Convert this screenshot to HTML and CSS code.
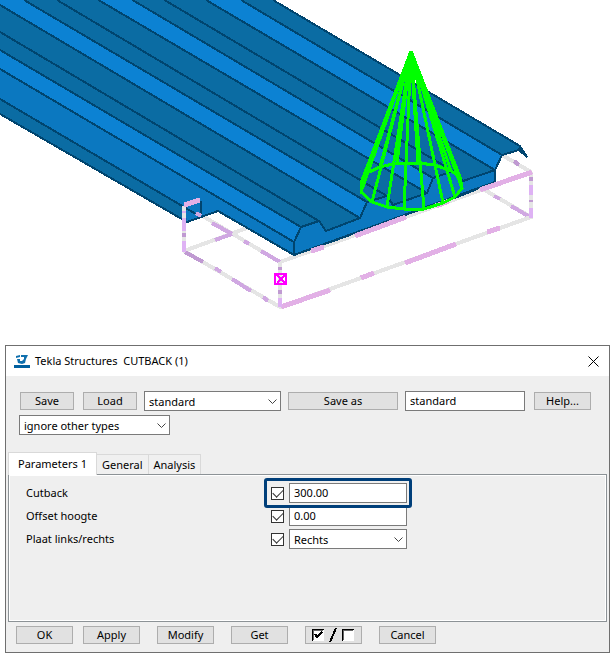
FILE: index.html
```html
<!DOCTYPE html>
<html lang="en">
<head>
<meta charset="utf-8">
<meta name="viewport" content="width=device-width, initial-scale=1">
<title>Tekla Structures CUTBACK (1)</title>
<link rel="stylesheet" href="styles.css">
</head>
<body>
<svg class="scene" viewBox="0 0 612 345" role="img" aria-label="Profiled sheet with cutback symbol" shape-rendering="crispEdges">
  <!-- bounding box edges hidden partly by the sheet -->
  <g class="guide">
    <path d="M184 251L247 228M201 215L280 262M280 262L531 172M502 155L531 172M483 189L531 217"/>
  </g>
  <path class="dash-a" d="M215 240L232 234M494 196L500 199M511 206L530 217M212 223L232 234M244 241L249 244M261 251L280 262"/>
  <path class="dash-b" d="M514 161L519 165"/>

  <!-- sheet surfaces -->
  <path class="dark" d="M0 0H273L520 146L527 157L518 150L502 155L495 170L463 181L453 171L433 178L427 193L393 205L387 196L367 202L360 218L326 231L319 221L301 227L294 242L218 211L187 222L0 113.500Z"/>
  <path class="light" d="M206 0H241L502 155L495 170ZM98.500 0H132.500L433 178L427 193ZM0 0H24L367 202L360 218L0 5ZM0 50L301 227L294 242L0 69Z"/>
  <path class="mid" d="M0 69L294 242V255L218 211L201 217L0 99ZM294 242L301 227L319 221L326 231L360 218L367 202L387 196L393 205L427 193L433 178L453 171L463 181L495 170V182L294 255ZM185 205L201 200V217L187 222Z"/>
  <path class="edge" d="M273 0L520 146L527 157M241 0L502 155M206 0L495 170M164.500 0L453 171M132.500 0L433 178M98.500 0L427 193M57 0L387 196M24 0L367 202M0 5L360 218M0 32L319 221M0 50L301 227M0 69L294 242M0 99L201 217M201 201V214"/>
  <path class="edge" d="M294 255V242L301 227L319 221L326 231L360 218L367 202L387 196L393 205L427 193L433 178L453 171L463 181L495 170L502 155L519 150L527 157M495 170V182"/>
  <path class="edge bold" d="M0 114L187 222L218 211L294 255L495 182"/>
  <path class="tip" d="M520 146L528 157L516 150Z"/>

  <!-- bounding box edges in front -->
  <g class="guide">
    <path d="M184 206V251L280 307L531 217V172M280 262V307"/>
  </g>
  <path class="edge bold" d="M294 255L350 235M405 215L434 205M455 198L482 187"/>
  <path class="dash-a" d="M196 213L201 216M215 268L221 272M232 279L251 291M263 297L268 301"/>
  <path class="dash-b" d="M185 252L203 262"/>
  <path class="dash-c" d="M184 205L200 200M281 307L330 290M361 278L374 273M405 263L456 244M487 232L500 228M311 251L324 247M355 236L406 217M436 206L449 201M480 190L532 172"/>
  <path class="dash-d" d="M184 211V213M184 218V231M184 241V252M280 298V307M531 185V195M531 208V218"/>
  <path class="dash-b" d="M184 233V237M280 267V270M280 290V294M531 177V181M531 200V202"/>
  <path class="handle" d="M275 274H286V284H275ZM277 275L285 283M285 275L277 283"/>

  <!-- cone symbol -->
  <path class="cone" d="M411 51L361 183M411 51L361 192M411 51L372 202M411 51L387 207M411 51L404 209M411 51L424 209M411 51L443 203M411 51L455 197M411 51L462 188M411 51L460 177M411 51L451 171M411 51L435 165M411 51L418 163M411 51L397 163M411 51L380 167M411 51L367 173"/>
  <path class="cone" d="M361 183L367 173L380 167L397 163L418 163L435 165L451 171L460 177L462 188L455 197L443 203L424 209L404 209L387 207L372 202L361 192Z"/>
</svg>

<main class="dialog">
  <header class="titlebar">
    <svg class="logo" viewBox="0 0 16 14" aria-hidden="true">
      <path fill="#005f9e" d="M0 11H16V14H0Z"/>
      <path fill="#1070ae" d="M2 2L6 1V3L2 4ZM7 1H14L12 5L11 9L8 10L4 9L3 5H6V7H8L10 5V3H7Z"/>
    </svg>
    <h1 class="title">Tekla Structures&nbsp; CUTBACK (1)</h1>
    <button class="close" type="button" aria-label="Close">
      <svg viewBox="0 0 11 11" width="11" height="11" aria-hidden="true"><path d="M.5 .5L10.500 10.500M10.500 .5L.5 10.500" stroke="#000" fill="none"/></svg>
    </button>
  </header>

  <div class="toolbar">
    <div class="pair">
      <button class="btn" type="button">Save</button>
      <button class="btn" type="button">Load</button>
    </div>
    <div class="combo profile">
      <select aria-label="Saved settings"><option>standard</option></select>
      <svg class="chevron" viewBox="0 0 9 6" aria-hidden="true"><path d="M.5 .5L4.500 4.500L8.500 .5"/></svg>
    </div>
    <button class="btn save-as" type="button">Save as</button>
    <input class="field name" type="text" value="standard" aria-label="Save as name">
    <button class="btn help" type="button">Help...</button>
  </div>
  <div class="combo filter">
    <select aria-label="Type filter"><option>ignore other types</option></select>
    <svg class="chevron" viewBox="0 0 9 6" aria-hidden="true"><path d="M.5 .5L4.500 4.500L8.500 .5"/></svg>
  </div>

  <div class="tabs" role="tablist">
    <button class="tab active" type="button" role="tab" aria-selected="true">Parameters 1</button>
    <button class="tab" type="button" role="tab" aria-selected="false">General</button>
    <button class="tab" type="button" role="tab" aria-selected="false">Analysis</button>
  </div>
  <section class="panel" role="tabpanel">
    <div class="row">
      <label for="cutback">Cutback</label>
      <div class="entry highlight">
        <input class="check" type="checkbox" checked aria-label="Use Cutback">
        <input class="field" id="cutback" type="text" value="300.00">
      </div>
    </div>
    <div class="row">
      <label for="offset">Offset hoogte</label>
      <div class="entry">
        <input class="check" type="checkbox" checked aria-label="Use Offset hoogte">
        <input class="field" id="offset" type="text" value="0.00">
      </div>
    </div>
    <div class="row">
      <label for="side">Plaat links/rechts</label>
      <div class="entry">
        <input class="check" type="checkbox" checked aria-label="Use Plaat links/rechts">
        <div class="combo">
          <select id="side"><option>Rechts</option></select>
          <svg class="chevron" viewBox="0 0 9 6" aria-hidden="true"><path d="M.5 .5L4.500 4.500L8.500 .5"/></svg>
        </div>
      </div>
    </div>
  </section>

  <footer class="actions">
    <button class="btn ok" type="button">OK</button>
    <button class="btn" type="button">Apply</button>
    <button class="btn" type="button">Modify</button>
    <button class="btn" type="button">Get</button>
    <button class="btn" type="button" aria-label="Toggle all">
      <svg viewBox="0 0 43 16" width="43" height="16" shape-rendering="crispEdges" aria-hidden="true">
        <path fill="#fff" d="M0 2H12V14H0ZM30 2H42V14H30Z"/>
        <path fill="#000" d="M0 2H12V3H1V14H0ZM30 2H42V3H31V14H30Z"/>
        <path fill="#666" d="M1 3H11V4H2V13H1ZM31 3H41V4H32V13H31Z"/>
        <path fill="none" stroke="#000" stroke-width="2" d="M3 7L5 10L10 5"/>
        <path fill="none" stroke="#000" stroke-width="2" d="M24 1L18 15"/>
      </svg>
    </button>
    <button class="btn" type="button">Cancel</button>
  </footer>
</main>
</body>
</html>
```
FILE: styles.css
```css
* { box-sizing: border-box; }

body {
  margin: 0;
  background: #fff;
  color: #000;
  font-family: "Noto Sans", "Open Sans", sans-serif;
  font-size: 11px;
  line-height: 16px;
}

button, input, select { font: inherit; color: inherit; margin: 0; }

/* model view */
.scene { display: block; width: 100%; height: auto; }
.scene path { fill: none; }
.scene .dark { fill: #0b6ca3; }
.scene .light { fill: #0c82d3; }
.scene .mid { fill: #0b78c0; }
.scene .tip { fill: #00456f; }
.edge { stroke: #00456f; stroke-width: 2; }
.guide { stroke: #e5e5e5; stroke-width: 4; }
.dash-a, .dash-b, .dash-c, .dash-d { stroke-width: 4; }
.dash-a { stroke: #d0a8e2; }
.dash-b { stroke: #c09ad2; }
.dash-c { stroke: #e2b0e6; stroke-width: 5; }
.dash-d { stroke: #deb2f4; }
.handle { stroke: #f0f; stroke-width: 2; }
.cone { stroke: #0f0; stroke-width: 3; }

/* dialog */
.dialog {
  margin: 0 2px 2px 5px;
  border: 1px solid #6f6f6f;
  background: #efefef;
}

.titlebar {
  display: flex;
  align-items: center;
  height: 30px;
  padding: 0 10px 0 8px;
  background: #fff;
}
.logo { width: 16px; height: 14px; }
.title { flex: 1; margin: 0 0 0 5px; font-size: 11px; font-weight: 400; }
.close { display: flex; padding: 0; border: 0; background: none; }

.btn {
  display: flex;
  align-items: center;
  justify-content: center;
  width: 57px;
  height: 18px;
  padding: 0;
  border: 1px solid #adadad;
  background: #e1e1e1;
}

.field, .combo select {
  width: 100%;
  height: 20px;
  padding: 0 4px;
  border: 1px solid #7a7a7a;
  border-radius: 0;
  background: #fff;
}
.field { padding-bottom: 2px; }
.combo { position: relative; display: flex; }
.combo select { appearance: none; padding-top: 2px; }
.chevron { position: absolute; right: 4px; top: 8px; width: 9px; height: 6px; pointer-events: none; }
.chevron path { fill: none; stroke: #444; }

.toolbar { display: flex; align-items: center; gap: 7px; padding: 15px 14px 4px; }
.pair { display: flex; gap: 9px; }
.pair .btn { width: 54px; }
.profile { width: 137px; }
.save-as { width: 110px; }
.name { width: 120px; }
.help { margin-left: 2px; }
.filter { width: 151px; margin-left: 13px; }

.tabs { display: flex; align-items: flex-end; margin: 17px 0 0 2px; }
.tab {
  height: 20px;
  padding: 0 5px;
  border: 1px solid #d9d9d9;
  border-width: 1px 1px 0 0;
  background: #f0f0f0;
}
.tab.active {
  height: 23px;
  margin-bottom: -1px;
  padding: 0 9px;
  border-left-width: 1px;
  background: #fff;
  z-index: 1;
}

.panel {
  height: 148px;
  margin: 0 2px;
  padding: 8px 17px;
  border: 1px solid #8c9296;
  box-shadow: inset 1px 1px #fff, inset -1px -1px #fff;
}
.row { display: grid; grid-template-columns: 245px 136px; align-items: center; height: 20px; margin-bottom: 3px; }
.entry { display: flex; align-items: center; gap: 5px; }
.entry .combo { flex: 1; }
.entry .field { flex: 1; min-width: 0; }
.highlight {
  position: relative;
  z-index: 1;
  margin: -5px -5px -5px -7px;
  padding: 2px 2px 2px 4px;
  border: 3px solid #003f7a;
  border-radius: 3px;
  background: #efefef;
}

.check {
  appearance: none;
  flex: none;
  display: grid;
  place-items: center;
  width: 13px;
  height: 13px;
  border: 1px solid #333;
  background: #fff;
}
.check:checked::before {
  content: "";
  width: 9px;
  height: 5px;
  margin-top: -3px;
  border: solid #333;
  border-width: 0 0 1px 1px;
  transform: rotate(-45deg);
}

.actions { display: flex; gap: 17px; padding: 4px 10px 8px; }
.ok { margin-right: -7px; }
```
